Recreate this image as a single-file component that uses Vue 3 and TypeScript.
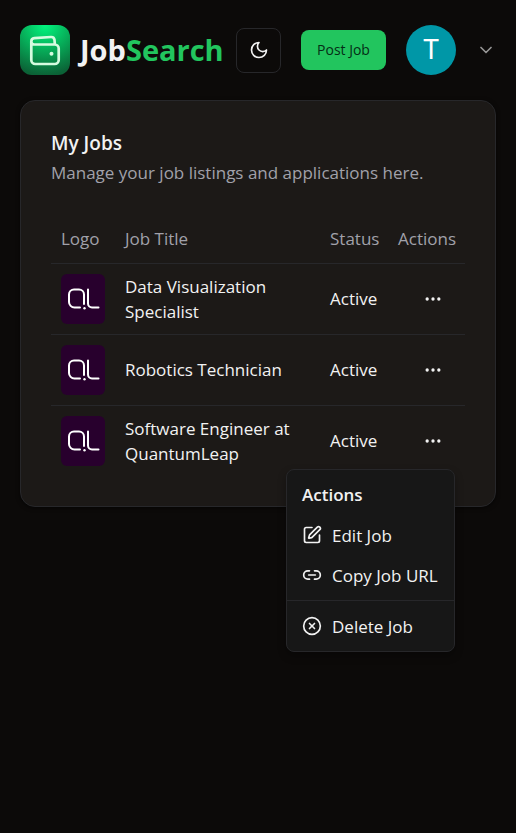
<script setup lang="ts">
import { ref } from 'vue'

interface Job {
  id: number
  title: string
  status: string
}

const jobs: Job[] = [
  { id: 1, title: 'Data Visualization Specialist', status: 'Active' },
  { id: 2, title: 'Robotics Technician', status: 'Active' },
  { id: 3, title: 'Software Engineer at QuantumLeap', status: 'Active' },
]

const openMenu = ref<number | null>(3)

function toggleMenu(id: number): void {
  openMenu.value = openMenu.value === id ? null : id
}
</script>

<template>
  <div class="page">
    <header class="topbar">
      <a class="brand" href="#">
        <svg class="brand-logo" viewBox="0 0 50 50" aria-hidden="true">
          <defs>
            <radialGradient id="brand-fill" cx="0.5" cy="0" r="1">
              <stop offset="0" stop-color="#02f67f" />
              <stop offset="0.45" stop-color="#06b45c" />
              <stop offset="1" stop-color="#0b6236" />
            </radialGradient>
          </defs>
          <rect width="50" height="50" rx="12" fill="url(#brand-fill)" />
          <g fill="none" stroke="#d5fbdf" stroke-width="2.7" stroke-linecap="round" stroke-linejoin="round">
            <path d="M11.300 16.500v18.500a4 4 0 0 0 4 4h19.400a4 4 0 0 0 4-4V23.500a4 4 0 0 0-4-4H14.300a3 3 0 0 1-3-3c0-1.900 1.200-3.100 3-3.300L31 12c2-.1 3.300 1 3.500 3l.3 4" />
          </g>
          <circle cx="31.500" cy="28.800" r="2" fill="#d5fbdf" />
        </svg>
        <span class="brand-name">Job<span class="brand-accent">Search</span></span>
      </a>
      <nav class="tools">
        <button class="theme-button" type="button" aria-label="Toggle theme">
          <svg class="icon" viewBox="0 0 24 24" aria-hidden="true">
            <path d="M12 3a6 6 0 0 0 9 9 9 9 0 1 1-9-9Z" />
          </svg>
        </button>
        <a class="post-button" href="#">Post Job</a>
        <button class="account" type="button" aria-label="Account">
          <span class="avatar">T</span>
          <svg class="icon chevron" viewBox="0 0 24 24" aria-hidden="true">
            <path d="m6 9 6 6 6-6" />
          </svg>
        </button>
      </nav>
    </header>

    <main class="card">
      <div class="card-head">
        <h1>My Jobs</h1>
        <p>Manage your job listings and applications here.</p>
      </div>
      <table>
        <thead>
          <tr>
            <th class="col-logo" scope="col">Logo</th>
            <th scope="col">Job Title</th>
            <th class="col-status" scope="col">Status</th>
            <th class="col-actions" scope="col">Actions</th>
          </tr>
        </thead>
        <tbody>
          <tr v-for="job in jobs" :key="job.id">
            <td>
              <svg class="company" viewBox="0 0 44 50" role="img" aria-label="QuantumLeap">
                <rect width="44" height="50" rx="6" fill="#28002d" />
                <g fill="none" stroke="#fff" stroke-width="2" stroke-linecap="round">
                  <path d="M19 33.500h-5.500a5.500 5.500 0 0 1-5.500-5.500v-7.500a5 5 0 0 1 5-5h5a5 5 0 0 1 5 5v9.500" />
                  <path d="M27 15.500v14a4 4 0 0 0 4 4h6.500" />
                </g>
                <circle cx="23.500" cy="34.300" r="1.200" fill="#fff" />
              </svg>
            </td>
            <td>{{ job.title }}</td>
            <td>{{ job.status }}</td>
            <td class="cell-actions">
              <div class="menu-anchor">
                <button
                  class="more"
                  type="button"
                  :aria-label="`Actions for ${job.title}`"
                  :aria-expanded="openMenu === job.id"
                  @click="toggleMenu(job.id)"
                >
                  <svg class="icon" viewBox="0 0 24 24" aria-hidden="true">
                    <circle cx="12" cy="12" r="1" />
                    <circle cx="19" cy="12" r="1" />
                    <circle cx="5" cy="12" r="1" />
                  </svg>
                </button>
                <div v-if="openMenu === job.id" class="menu">
                  <div class="menu-label">Actions</div>
                  <a class="menu-item" href="#">
                    <svg class="icon" viewBox="0 0 24 24" aria-hidden="true">
                      <path d="M12 3H5a2 2 0 0 0-2 2v14a2 2 0 0 0 2 2h14a2 2 0 0 0 2-2v-7" />
                      <path d="M18.375 2.625a1 1 0 0 1 3 3l-9.013 9.014a2 2 0 0 1-.853.505l-2.873.84a.5.5 0 0 1-.62-.62l.84-2.873a2 2 0 0 1 .506-.852z" />
                    </svg>
                    Edit Job
                  </a>
                  <button class="menu-item" type="button">
                    <svg class="icon" viewBox="0 0 24 24" aria-hidden="true">
                      <path d="M9 17H7A5 5 0 0 1 7 7h2" />
                      <path d="M15 7h2a5 5 0 1 1 0 10h-2" />
                      <path d="M8 12h8" />
                    </svg>
                    Copy Job URL
                  </button>
                  <hr />
                  <button class="menu-item" type="button">
                    <svg class="icon" viewBox="0 0 24 24" aria-hidden="true">
                      <circle cx="12" cy="12" r="10" />
                      <path d="m15 9-6 6" />
                      <path d="m9 9 6 6" />
                    </svg>
                    Delete Job
                  </button>
                </div>
              </div>
            </td>
          </tr>
        </tbody>
      </table>
    </main>
  </div>
</template>

<style>
body {
  margin: 0;
  background: #0c0a09;
}
</style>

<style scoped>
.page,
.page * {
  box-sizing: border-box;
}

.page {
  min-height: 100vh;
  padding: 25px 20px;
  color: #f2f2f2;
  font-family: "Segoe UI", "Open Sans", "Noto Sans", sans-serif;
  font-size: 17px;
  line-height: 25px;
}

button {
  padding: 0;
  border: 0;
  background: none;
  color: inherit;
  font: inherit;
  cursor: pointer;
}

a {
  color: inherit;
  text-decoration: none;
}

.icon {
  flex: none;
  width: 20px;
  height: 20px;
  fill: none;
  stroke: currentColor;
  stroke-width: 2;
  stroke-linecap: round;
  stroke-linejoin: round;
}

.topbar {
  display: flex;
  align-items: center;
  justify-content: space-between;
}

.brand {
  display: flex;
  align-items: center;
  gap: 10px;
}

.brand-logo {
  width: 50px;
  height: 50px;
}

.brand-name {
  font-size: 29px;
  font-weight: 700;
  line-height: 40px;
}

.brand-accent {
  color: #22c55e;
}

.tools {
  display: flex;
  align-items: center;
  gap: 20px;
}

.theme-button {
  display: flex;
  align-items: center;
  justify-content: center;
  width: 45px;
  height: 45px;
  border: 1px solid #27272a;
  border-radius: 8px;
}

.post-button {
  min-width: 85px;
  padding: 0 10px;
  border-radius: 8px;
  background: #22c55e;
  color: #052e16;
  font-size: 14px;
  line-height: 40px;
  text-align: center;
  white-space: nowrap;
}

.account {
  display: flex;
  align-items: center;
  gap: 20px;
}

.avatar {
  width: 50px;
  border-radius: 50%;
  background: #0097a7;
  color: #fff;
  font-family: Roboto, sans-serif;
  font-size: 27px;
  line-height: 50px;
  text-align: center;
}

.chevron {
  opacity: 0.6;
}

.card {
  margin-top: 25px;
  padding: 30px;
  border: 1px solid #27272a;
  border-radius: 15px;
  background: #1c1917;
  box-shadow: 0 1px 4px rgb(0 0 0 / 60%);
}

.card-head {
  margin-bottom: 30px;
}

h1 {
  margin: 0 0 5px;
  font-size: 19px;
  font-weight: 600;
  line-height: 24px;
}

p {
  margin: 0;
  color: #a1a1aa;
}

table {
  width: 100%;
  border-collapse: collapse;
  table-layout: fixed;
}

th {
  height: 48px;
  padding: 0 10px;
  color: #a1a1aa;
  font-weight: 400;
  text-align: left;
}

td {
  padding: 10px;
}

tr {
  border-bottom: 1px solid #27272a;
}

tbody tr:last-child {
  border-bottom: 0;
}

.col-logo {
  width: 64px;
}

.col-status {
  width: 68px;
}

.col-actions {
  width: 77px;
}

.company {
  display: block;
  width: 44px;
  height: 50px;
}

.cell-actions {
  padding: 0 10px;
}

.menu-anchor {
  position: relative;
  width: 45px;
  margin-left: auto;
}

.more {
  display: flex;
  align-items: center;
  justify-content: center;
  width: 45px;
  height: 45px;
}

.menu {
  position: absolute;
  top: 100%;
  right: 0;
  min-width: 169px;
  margin-top: 6px;
  padding: 5px 0;
  border: 1px solid #27272a;
  border-radius: 8px;
  background: #171717;
  box-shadow: 0 4px 8px rgb(0 0 0 / 30%);
  white-space: nowrap;
}

.menu-label {
  padding: 0 15px;
  font-weight: 600;
  line-height: 40px;
}

.menu-item {
  display: flex;
  align-items: center;
  gap: 10px;
  width: 100%;
  height: 40px;
  padding: 0 15px;
}

hr {
  height: 1px;
  margin: 5px 0;
  border: 0;
  background: #27272a;
}
</style>
